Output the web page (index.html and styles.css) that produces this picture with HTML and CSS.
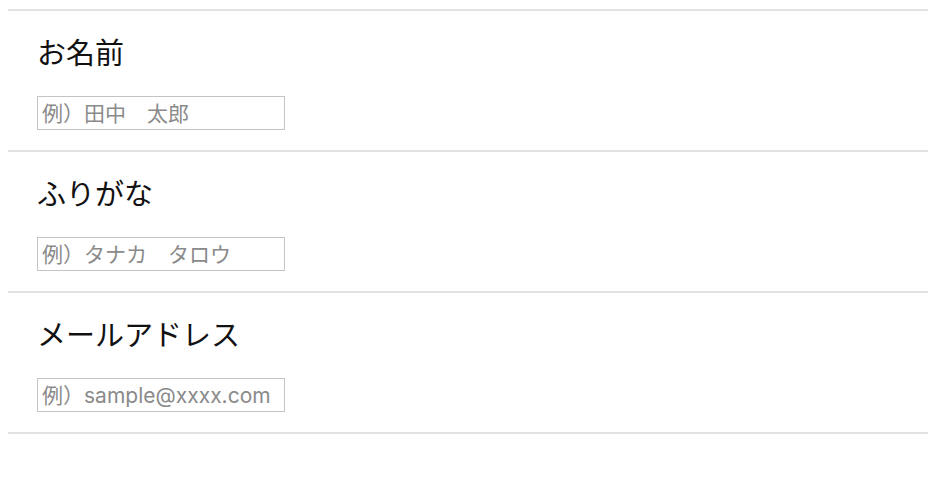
FILE: index.html
```html
<!DOCTYPE html>
<html lang="ja">
<head>
<meta charset="utf-8">
<title>フォーム</title>
<link rel="stylesheet" href="styles.css">
</head>
<body>
<form class="form">
  <div class="field">
    <label class="field-label" for="name">お名前</label>
    <input class="field-input" id="name" type="text" placeholder="例）田中　太郎">
  </div>
  <div class="field">
    <label class="field-label" for="kana">ふりがな</label>
    <input class="field-input" id="kana" type="text" placeholder="例）タナカ　タロウ">
  </div>
  <div class="field">
    <label class="field-label" for="mail">メールアドレス</label>
    <input class="field-input" id="mail" type="email" placeholder="例）sample@xxxx.com">
  </div>
  <div class="field-end"></div>
</form>
</body>
</html>
```
FILE: styles.css
```css
html, body {
  margin: 0;
  padding: 0;
  background: #ffffff;
}

body {
  font-family: "Liberation Sans", "Noto Sans CJK JP", sans-serif;
  color: #111111;
}

.form {
  width: 920px;
  margin: 0;
  padding: 9px 0 0 8px;
}

.field {
  display: flex;
  flex-direction: column;
  align-items: flex-start;
  border-top: 2px solid #e2e2e2;
  padding: 25px 0 20px 29px;
}

.field-label {
  font-family: "Noto Sans CJK JP", sans-serif;
  font-size: 29px;
  line-height: 30px;
  color: #111111;
  margin-bottom: 30px;
}

.field-input {
  box-sizing: border-box;
  width: 248px;
  height: 34px;
  margin: 0;
  padding: 0 4px;
  border: 1px solid #c4c4c4;
  border-radius: 0;
  background: #ffffff;
  font-family: "Inter", "Noto Sans CJK JP", sans-serif;
  font-size: 21px;
  color: #222222;
  outline: none;
}

.field-input::placeholder {
  color: #8a8a8a;
  opacity: 1;
}

.field-end {
  border-top: 2px solid #e2e2e2;
}
```
